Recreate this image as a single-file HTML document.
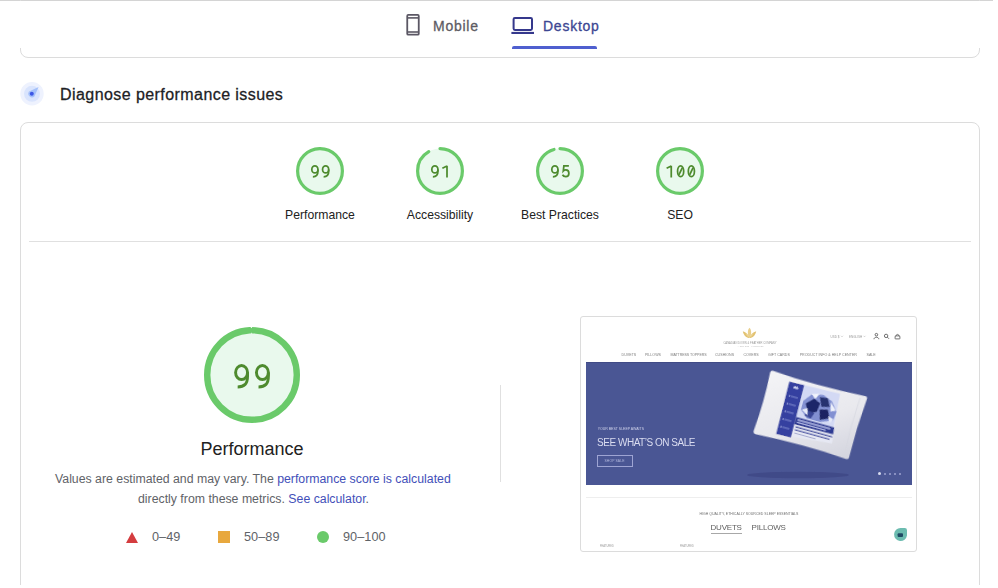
<!DOCTYPE html>
<html><head><meta charset="utf-8">
<style>
*{box-sizing:border-box;margin:0;padding:0}
html,body{width:998px;height:588px;overflow:hidden;background:#fff;font-family:"Liberation Sans",sans-serif}
.abs{position:absolute}
#topline{left:0;top:0;width:993px;height:1px;background:#d4d4d4}
#card1{left:20px;top:-20px;width:960px;height:78px;border:1px solid #dcdcdc;border-radius:8px}
.tab{font-size:14px;letter-spacing:0.75px;-webkit-text-stroke:0.3px currentColor;white-space:nowrap}
#card2{left:20px;top:122px;width:960px;height:500px;border:1px solid #dcdcdc;border-radius:8px}
#divh{left:29px;top:241px;width:942px;height:1px;background:#e0e0e0}
#divv{left:500px;top:385px;width:1px;height:97px;background:#e0e0e0}
.glabel{font-size:12.2px;color:#212121;white-space:nowrap;text-align:center;width:120px}
.gnum{font-family:"Liberation Sans",sans-serif;color:#4b8b2b;text-align:center;white-space:nowrap}
.gnum.s{font-size:17px;letter-spacing:1px;text-indent:1px}
.gnum.b{font-size:34px;letter-spacing:0px}
.txt{font-size:12.3px;color:#5f6368;line-height:20px;white-space:nowrap}
.lnk{color:#4350b9}
.leg{font-size:12.7px;letter-spacing:0.05px}
.nav{font-size:3.6px;line-height:6px;color:#7c7c7c;white-space:nowrap;letter-spacing:0.02px}
.tt{white-space:nowrap;line-height:6px}
.dot{top:473px;width:2px;height:2px;border-radius:50%;background:#9ea3d0}
.hero-t{font-size:10px;color:#dadcf0;letter-spacing:-0.47px;white-space:nowrap;line-height:12px}
.under-t{font-size:8px;color:#606060;letter-spacing:-0.2px;white-space:nowrap;line-height:12px}
</style></head><body>
<div id="topline" class="abs"></div>
<div id="card1" class="abs"></div>
<div class="abs" style="left:0;top:1px;width:998px;height:47px;background:#fff"></div>

<!-- tabs -->
<svg class="abs" style="left:404px;top:12px" width="20" height="26" viewBox="0 0 20 26">
  <rect x="3.25" y="2.95" width="11.5" height="19.7" rx="1" fill="none" stroke="#5b5764" stroke-width="1.8"/>
  <line x1="3" y1="5.9" x2="15" y2="5.9" stroke="#5b5764" stroke-width="1.6"/>
  <line x1="3" y1="20" x2="15" y2="20" stroke="#5b5764" stroke-width="1.6"/>
</svg>
<div class="abs tab" style="left:433px;top:17.5px;color:#5d5b63">Mobile</div>
<svg class="abs" style="left:510px;top:14px" width="26" height="22" viewBox="0 0 26 22">
  <rect x="3.6" y="3.9" width="18.4" height="12" rx="1.3" fill="none" stroke="#35388c" stroke-width="2"/>
  <rect x="1.4" y="17.9" width="22.6" height="2.1" fill="#35388c"/>
</svg>
<div class="abs tab" style="left:543px;top:17.5px;color:#3c4692">Desktop</div>
<div class="abs" style="left:512px;top:46px;width:85px;height:3px;background:#4f5fcf;border-radius:2px 2px 0 0"></div>

<!-- heading -->
<svg class="abs" style="left:19px;top:81px;filter:blur(0.3px)" width="26" height="26" viewBox="0 0 26 26">
  <circle cx="13" cy="12.8" r="11.7" fill="#eef2fe"/>
  <circle cx="13" cy="12.8" r="8" fill="#d9e4fd"/>
  <path d="M19.6 6 L10 10.4 A3.8 3.8 0 0 0 15.4 15.6 Z" fill="#a5c1fa"/>
  <circle cx="12.8" cy="12.8" r="2" fill="#3c57e6"/>
</svg>
<div class="abs" style="left:60px;top:85.5px;font-size:16px;letter-spacing:0.43px;-webkit-text-stroke:0.28px #202124;color:#202124;white-space:nowrap">Diagnose performance issues</div>

<div id="card2" class="abs"></div>

<!-- small gauges -->
<svg class="abs" style="left:296px;top:147px" width="48" height="48" viewBox="0 0 120 120">
  <circle cx="60" cy="60" r="56" fill="#e9f9ed"/>
  <circle cx="60" cy="60" r="56" fill="none" stroke="#6aca6a" stroke-width="8" stroke-linecap="round" stroke-dasharray="348.34 351.86" transform="rotate(-90 60 60)"/>
</svg>
<svg class="abs num" style="left:308.75px;top:163.10px" width="22.50" height="16.50" viewBox="-16.00 -16.00 180.00 132.00"><g fill="none" stroke="#4e8b2e" stroke-width="14"><g transform="translate(0 0)"><ellipse cx="31" cy="35" rx="24.5" ry="28.5"/><path d="M55.5 35 V50 C55.5 80 44 94 15 94"/></g><g transform="translate(86 0)"><ellipse cx="31" cy="35" rx="24.5" ry="28.5"/><path d="M55.5 35 V50 C55.5 80 44 94 15 94"/></g></g></svg>
<div class="abs glabel" style="left:260px;top:208px">Performance</div>
<svg class="abs" style="left:416px;top:147px" width="48" height="48" viewBox="0 0 120 120">
  <circle cx="60" cy="60" r="56" fill="#e9f9ed"/>
  <circle cx="60" cy="60" r="56" fill="none" stroke="#6aca6a" stroke-width="8" stroke-linecap="round" stroke-dasharray="320.19 351.86" transform="rotate(-90 60 60)"/>
</svg>
<svg class="abs num" style="left:428.75px;top:163.10px" width="22.50" height="16.50" viewBox="-16.00 -16.00 180.00 132.00"><g fill="none" stroke="#4e8b2e" stroke-width="14"><g transform="translate(0 0)"><ellipse cx="31" cy="35" rx="24.5" ry="28.5"/><path d="M55.5 35 V50 C55.5 80 44 94 15 94"/></g><g transform="translate(86 0)"><path d="M42 6 V100 M5 26 L42 8"/></g></g></svg>
<div class="abs glabel" style="left:380px;top:208px">Accessibility</div>
<svg class="abs" style="left:536px;top:147px" width="48" height="48" viewBox="0 0 120 120">
  <circle cx="60" cy="60" r="56" fill="#e9f9ed"/>
  <circle cx="60" cy="60" r="56" fill="none" stroke="#6aca6a" stroke-width="8" stroke-linecap="round" stroke-dasharray="334.27 351.86" transform="rotate(-90 60 60)"/>
</svg>
<svg class="abs num" style="left:548.75px;top:163.10px" width="22.50" height="16.50" viewBox="-16.00 -16.00 180.00 132.00"><g fill="none" stroke="#4e8b2e" stroke-width="14"><g transform="translate(0 0)"><ellipse cx="31" cy="35" rx="24.5" ry="28.5"/><path d="M55.5 35 V50 C55.5 80 44 94 15 94"/></g><g transform="translate(86 0)"><path d="M57 6.5 H17 L12.5 48 C19 41 26 38.5 33 38.5 C49 38.5 57 50 57 66 C57 84 47 93.5 32 93.5 C20 93.5 11 88 6 78"/></g></g></svg>
<div class="abs glabel" style="left:500px;top:208px">Best Practices</div>
<svg class="abs" style="left:656px;top:147px" width="48" height="48" viewBox="0 0 120 120">
  <circle cx="60" cy="60" r="56" fill="#e9f9ed"/>
  <circle cx="60" cy="60" r="56" fill="none" stroke="#6aca6a" stroke-width="8" stroke-linecap="round" stroke-dasharray="351.86 351.86" transform="rotate(-90 60 60)"/>
</svg>
<svg class="abs num" style="left:663.77px;top:163.10px" width="33.25" height="16.50" viewBox="-16.00 -16.00 266.00 132.00"><g fill="none" stroke="#4e8b2e" stroke-width="14"><g transform="translate(0 0)"><path d="M42 6 V100 M5 26 L42 8"/></g><g transform="translate(86 0)"><ellipse cx="31" cy="50" rx="24.5" ry="43"/><path d="M17 79 L45 21"/></g><g transform="translate(172 0)"><ellipse cx="31" cy="50" rx="24.5" ry="43"/><path d="M17 79 L45 21"/></g></g></svg>
<div class="abs glabel" style="left:620px;top:208px">SEO</div>

<div id="divh" class="abs"></div>

<!-- big gauge -->
<svg class="abs" style="left:204px;top:327px" width="96" height="96" viewBox="0 0 120 120">
  <circle cx="60" cy="60" r="56" fill="#e9f9ed"/>
  <circle cx="60" cy="60" r="56" fill="none" stroke="#6aca6a" stroke-width="8" stroke-linecap="round" stroke-dasharray="348.34 351.86" transform="rotate(-90 60 60)"/>
</svg>
<svg class="abs" style="left:246px;top:324px" width="12" height="12" viewBox="246 324 12 12"><path d="M250.5 326.7 L252.5 326.7 L251.5 328.2Z" fill="#fff"/><path d="M250.6 333.8 L252.4 333.8 L251.5 332.6Z" fill="#e9f9ed"/></svg>
<svg class="abs num" style="left:232.20px;top:362.20px" width="39.99" height="28.40" viewBox="-8.20 -8.20 163.89 116.39"><g fill="none" stroke="#4e8b2e" stroke-width="12"><g transform="translate(0.0 0)"><ellipse cx="31" cy="35" rx="24.5" ry="28.5"/><path d="M55.5 35 V50 C55.5 80 44 94 15 94"/></g><g transform="translate(85.5 0)"><ellipse cx="31" cy="35" rx="24.5" ry="28.5"/><path d="M55.5 35 V50 C55.5 80 44 94 15 94"/></g></g></svg>
<div class="abs" style="left:152px;top:439px;width:200px;text-align:center;font-size:18px;color:#212121">Performance</div>
<div class="abs txt" style="left:55px;top:469px">Values are estimated and may vary. The <span class="lnk">performance score is calculated</span></div>
<div class="abs txt" style="left:138px;top:489px">directly from these metrics. <span class="lnk">See calculator</span>.</div>

<!-- legend -->
<svg class="abs" style="left:126px;top:531px" width="12" height="12" viewBox="0 0 12 12"><path d="M6 1 L12 12 L0 12 Z" fill="#d43c3f"/></svg>
<div class="abs txt leg" style="left:152px;top:527px">0–49</div>
<div class="abs" style="left:218px;top:531px;width:12px;height:12px;background:#e8a83e"></div>
<div class="abs txt leg" style="left:244px;top:527px">50–89</div>
<div class="abs" style="left:317px;top:531px;width:12px;height:12px;border-radius:50%;background:#6aca6a"></div>
<div class="abs txt leg" style="left:343px;top:527px">90–100</div>

<div id="divv" class="abs"></div>

<!-- thumbnail -->
<div class="abs" style="left:580px;top:316px;width:337px;height:236px;border:1px solid #dcdcdc;border-radius:3px;background:#fff"></div>
<div class="abs" id="tw" style="left:0;top:0;width:998px;height:588px;filter:blur(0.25px)">
<!-- logo -->
<svg class="abs" style="left:742px;top:327px" width="15" height="12" viewBox="0 0 15 12">
  <path d="M7.5 0.8 C5.3 3 5.3 8 7.5 11 C9.7 8 9.7 3 7.5 0.8Z" fill="#e9cf8c"/>
  <path d="M0.8 4.2 C1.5 8.2 4.5 11 7.5 11 C6.5 7.8 4.2 5.2 0.8 4.2Z" fill="#e2c272"/>
  <path d="M14.2 4.2 C13.5 8.2 10.5 11 7.5 11 C8.5 7.8 10.8 5.2 14.2 4.2Z" fill="#e2c272"/>
  <path d="M3.5 5.5 C4 8 5.5 10 7.5 11 C9.5 10 11 8 11.5 5.5 C10 7 8.5 9 7.5 11 C6.5 9 5 7 3.5 5.5Z" fill="#eed592"/>
</svg>
<div class="abs tt" style="left:723.4px;top:340.6px;font-size:2.67px;color:#999;letter-spacing:0.03px">CANADIAN DOWN &amp; FEATHER COMPANY</div>
<div class="abs tt" style="left:737.4px;top:342.8px;font-size:2px;color:#bbb">— EST. 2005 · VANCOUVER —</div>
<!-- header right -->
<div class="abs tt" style="left:830.5px;top:334.1px;font-size:3px;color:#999">USD $</div>
<div class="abs tt" style="left:849px;top:334.1px;font-size:3px;color:#999">ENGLISH</div>
<svg class="abs" style="left:840px;top:335px" width="30" height="3" viewBox="0 0 30 3"><path d="M1 0.8 L2 1.8 L3 0.8 M23.5 0.8 L24.5 1.8 L25.5 0.8" fill="none" stroke="#aaa" stroke-width="0.5"/></svg>
<svg class="abs" style="left:872px;top:332px" width="32" height="9" viewBox="0 0 32 9">
  <circle cx="4.4" cy="2.7" r="1.3" fill="none" stroke="#4a4a4a" stroke-width="0.8"/>
  <path d="M2 7.2 C2 4.6 6.8 4.6 6.8 7.2" fill="none" stroke="#4a4a4a" stroke-width="0.8"/>
  <circle cx="14.1" cy="3.9" r="1.7" fill="none" stroke="#4a4a4a" stroke-width="0.8"/>
  <line x1="15.4" y1="5.2" x2="17" y2="6.8" stroke="#4a4a4a" stroke-width="0.8"/>
  <path d="M23.3 3.9 h4.4 l0.3 2.3 q0.1 0.7 -0.7 0.7 h-3.6 q-0.8 0 -0.7 -0.7 z" fill="none" stroke="#4a4a4a" stroke-width="0.75" stroke-linejoin="round"/>
  <path d="M24.3 3.9 v-0.3 a1.2 1.2 0 0 1 2.4 0 v0.3" fill="none" stroke="#4a4a4a" stroke-width="0.7"/>
</svg>
<!-- nav -->
<div class="abs nav" style="left:621.6px;top:351.5px">DUVETS</div>
<div class="abs nav" style="left:644.9px;top:351.5px">PILLOWS</div>
<div class="abs nav" style="left:670.5px;top:351.5px;letter-spacing:-0.08px">MATTRESS TOPPERS</div>
<div class="abs nav" style="left:715px;top:351.5px">CUSHIONS</div>
<div class="abs nav" style="left:743.4px;top:351.5px">COVERS</div>
<div class="abs nav" style="left:768px;top:351.5px">GIFT CARDS</div>
<div class="abs nav" style="left:799.7px;top:351.5px">PRODUCT INFO &amp; HELP CENTER</div>
<div class="abs nav" style="left:866.6px;top:351.5px;letter-spacing:-0.05px">SALE</div>
<!-- hero -->
<div class="abs" style="left:586px;top:362px;width:326px;height:123px;background:#4a5694"></div>
<div class="abs" style="left:586px;top:362px;width:326px;height:1px;background:#414b86"></div>
<div class="abs tt" style="left:597.7px;top:426px;font-size:3.5px;color:#cfd2ea">YOUR BEST SLEEP AWAITS</div>
<div class="abs hero-t" style="left:597px;top:437px">SEE WHAT’S ON SALE</div>
<div class="abs" style="left:597px;top:455px;width:36px;height:12px;border:1px solid #9ea4d3"></div>
<div class="abs tt" style="left:604.5px;top:458.3px;font-size:3.4px;color:#b3b8de;letter-spacing:0.1px">SHOP SALE</div>
<svg class="abs" style="left:740px;top:362px" width="172" height="123" viewBox="740 362 172 123">
  <defs>
    <linearGradient id="pg" x1="0" y1="0" x2="1" y2="1">
      <stop offset="0" stop-color="#f4f4f6"/><stop offset="0.55" stop-color="#e9e9ee"/><stop offset="1" stop-color="#d2d3dd"/>
    </linearGradient>
    <filter id="soft"><feGaussianBlur stdDeviation="0.4"/></filter>
  </defs>
  <ellipse cx="798" cy="475" rx="51" ry="3.3" fill="#3d4483" opacity=".7" filter="url(#soft)"/>
  <g transform="translate(809.75 415) rotate(15.5)" filter="url(#soft)">
    <path d="M-47 -32.8 Q0 -29.5 49 -33 Q51.2 -33 50.8 -30 Q48.3 0 49.2 30.5 Q49.3 33 46.5 32.8 Q0 29.8 -47 33 Q-50 33 -49.8 30 Q-47.3 0 -49.5 -30 Q-49.5 -33 -47 -32.8Z" fill="url(#pg)"/>
    <path d="M-28.6 -26.7 L23.5 -28.5 L29 21.5 L-27.3 27.3Z" fill="#e6e8f3"/>
    <path d="M-13.3 -27.3 L23.5 -28.5 L26 5.8 L-12.6 6.1Z" fill="#d3d9f4"/>
    <path d="M-10 -12 L-3 -21 L8 -23 L18 -19 L25 -10 L24 -1 L12 4 L-2 4 L-10 -3 Z" fill="#8290d2"/>
    <path d="M-7 -10 L0 -17 L7 -14 L6 -5 L-2 -1 Z" fill="#1f2869"/>
    <path d="M5 -20 L13 -21 L17 -13 L9 -11 Z" fill="#263070"/>
    <path d="M8 -8 L16 -10 L20 -2 L11 2 Z" fill="#1c2462"/>
    <path d="M-3 -4 L4 -3 L2 3 L-5 2Z" fill="#3a4796"/>
    <path d="M-4 -21 L4 -23 L1 -17Z" fill="#f2f4fc"/>
    <path d="M17 -18 L24 -11 L19 -9Z" fill="#eef1fb"/>
    <path d="M-9 -3 L-4 -6 L-2 1Z" fill="#e8ecfa"/>
    <path d="M18 -4 L24 -2 L21 3Z" fill="#e4e8f8"/>
    <path d="M-28.6 -26.7 L-13.3 -27.3 L-12.1 26.7 L-27.3 27.3Z" fill="#3540a0"/>
    <path d="M-12.6 5.6 L27 5.4 L27.7 12.5 L-12.5 13Z" fill="#2f3b93"/>
    <rect x="-10.5" y="7.3" width="34" height="1.3" fill="#c6ccf0"/>
    <rect x="-10.5" y="9.9" width="30" height="1.1" fill="#aeb6e6"/>
    <rect x="-10.5" y="14.6" width="38" height="1.4" fill="#4a54a2"/>
    <rect x="-10.5" y="17.6" width="36" height="1.4" fill="#5862ac"/>
    <rect x="-10" y="21" width="22" height="1" fill="#a4a9d0"/>
    <path d="M-23 -22.5 l1.2 -1.8 l1.2 1.2 l1.2 -1.2 l1.2 1.8 v1 h-4.8z" fill="#d6daf6"/>
    <circle cx="-24.5" cy="-13" r="0.8" fill="#aeb6ea"/>
    <rect x="-23" y="-13.5" width="7" height="0.9" fill="#8993d4"/>
    <circle cx="-24.5" cy="-5" r="0.8" fill="#aeb6ea"/>
    <rect x="-23" y="-5.5" width="7" height="0.9" fill="#8993d4"/>
    <circle cx="-24.5" cy="3" r="0.8" fill="#aeb6ea"/>
    <rect x="-23" y="2.5" width="7" height="0.9" fill="#8993d4"/>
    <circle cx="-24.5" cy="11" r="0.8" fill="#aeb6ea"/>
    <rect x="-23" y="10.5" width="7" height="0.9" fill="#8993d4"/>
    <circle cx="-24.5" cy="19" r="0.8" fill="#aeb6ea"/>
    <rect x="-23" y="18.5" width="7" height="0.9" fill="#8993d4"/>
    <path d="M44 -30 Q42 0 44 30" fill="none" stroke="#d6d7e0" stroke-width="0.7"/>
  </g>
</svg>
<div class="abs" style="left:877.5px;top:471.8px;width:3px;height:3px;border-radius:50%;background:#d8dbf0"></div>
<div class="abs dot" style="left:884px"></div>
<div class="abs dot" style="left:889px"></div>
<div class="abs dot" style="left:894px"></div>
<div class="abs dot" style="left:899px"></div>
<!-- below hero -->
<div class="abs" style="left:586px;top:497px;width:326px;height:1px;background:#eeeeee"></div>
<div class="abs tt" style="left:699.4px;top:510.6px;font-size:3.54px;color:#707070">HIGH QUALITY, ETHICALLY SOURCED SLEEP ESSENTIALS</div>
<div class="abs under-t" style="left:710.5px;top:521.5px">DUVETS</div>
<div class="abs under-t" style="left:751.5px;top:521.5px">PILLOWS</div>
<div class="abs" style="left:711px;top:533px;width:31px;height:1px;background:#a8a8a8"></div>
<div class="abs tt" style="left:600px;top:543.5px;font-size:2.6px;color:#999">FEATURED</div>
<div class="abs tt" style="left:680px;top:543.5px;font-size:2.6px;color:#999">FEATURED</div>
<svg class="abs" style="left:892px;top:527px" width="16" height="16" viewBox="0 0 16 16">
  <path d="M8.5 1 H12.8 Q15 1 15 3.2 V8.5 A6.5 6.5 0 1 1 8.5 1Z" fill="#6cbcb0"/>
  <rect x="5.6" y="6.2" width="5.4" height="3.8" rx="1" fill="#1f4a63"/>
</svg>
</div>
<div class="abs" style="left:0;top:585px;width:998px;height:3px;background:#fff"></div>
</body></html>
